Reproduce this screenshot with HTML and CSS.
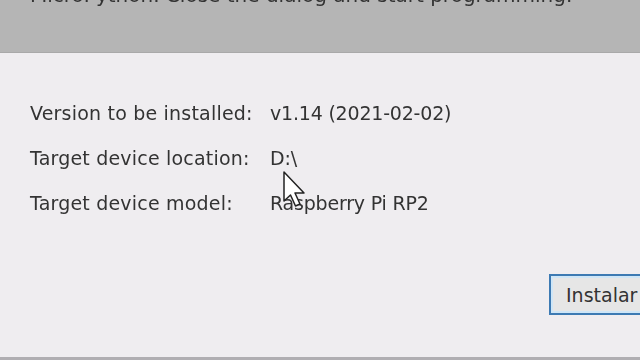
FILE: index.html
```html
<!DOCTYPE html>
<html lang="en">
<head>
    <meta charset="UTF-8">
    <meta name="viewport" content="width=device-width, initial-scale=1.0">
    <title>Install MicroPython</title>
    <link rel="stylesheet" href="styles.css">
</head>
<body>

    <!-- Top banner (scrolled partly out of view) -->
    <div class="banner">
        <p class="banner-text">MicroPython. Close the dialog and start programming.</p>
    </div>

    <!-- Install details -->
    <div class="dialog">
        <div class="details">
            <span class="label">Version to be installed:</span>
            <span class="value">v1.14 (2021-02-02)</span>

            <span class="label">Target device location:</span>
            <span class="value">D:\</span>

            <span class="label">Target device model:</span>
            <span class="value">Raspberry Pi RP2</span>
        </div>

        <div class="actions">
            <button class="button default">Instalar</button>
        </div>
    </div>

    <!-- Mouse pointer -->
    <svg class="cursor" width="26" height="38" viewBox="0 0 26 38">
        <path d="M2 2 L2 31 L8.5 25 L13.5 36 L18 34 L13 23 L22 23 Z" fill="#fff" stroke="#222" stroke-width="1.5" stroke-linejoin="round"/>
    </svg>

</body>
</html>
```

FILE: styles.css
```css
body {
    margin: 0;
    width: 640px;
    height: 360px;
    overflow: hidden;
    position: relative;
    font-family: 'DejaVu Sans', sans-serif;
    font-size: 19px;
    color: #333;
    background-color: #efedf0;
}

.banner {
    height: 52px;
    background-color: #b5b5b5;
    border-bottom: 1px solid #a9a9a9;
    overflow: hidden;
}

.banner-text {
    margin: -17px 0 0 30px;
    font-size: 20px;
    color: #333;
    white-space: nowrap;
    filter: blur(0.4px);
}

.dialog {
    height: 304px;
    border-bottom: 3px solid #b0aeb2;
    display: flex;
    flex-direction: column;
}

.details {
    display: grid;
    grid-template-columns: 240px auto;
    grid-auto-rows: 45px;
    align-items: center;
    padding: 37px 0 0 30px;
    filter: blur(0.4px);
}

.label {
    letter-spacing: 0.2px;
}

.value {
    letter-spacing: -0.2px;
}

.actions {
    display: flex;
    justify-content: flex-end;
    margin-top: 49px;
}

.button {
    font-family: inherit;
    font-size: 19px;
    color: #333;
    width: 112px;
    height: 41px;
    margin-right: -21px;
    padding: 0 0 0 15px;
    text-align: left;
    background-color: #e6e6e6;
    border: 2px solid #3d7ab3;
    box-shadow: inset 0 0 0 2px #cfe6f7;
}

.cursor {
    position: absolute;
    left: 282px;
    top: 170px;
}
```
